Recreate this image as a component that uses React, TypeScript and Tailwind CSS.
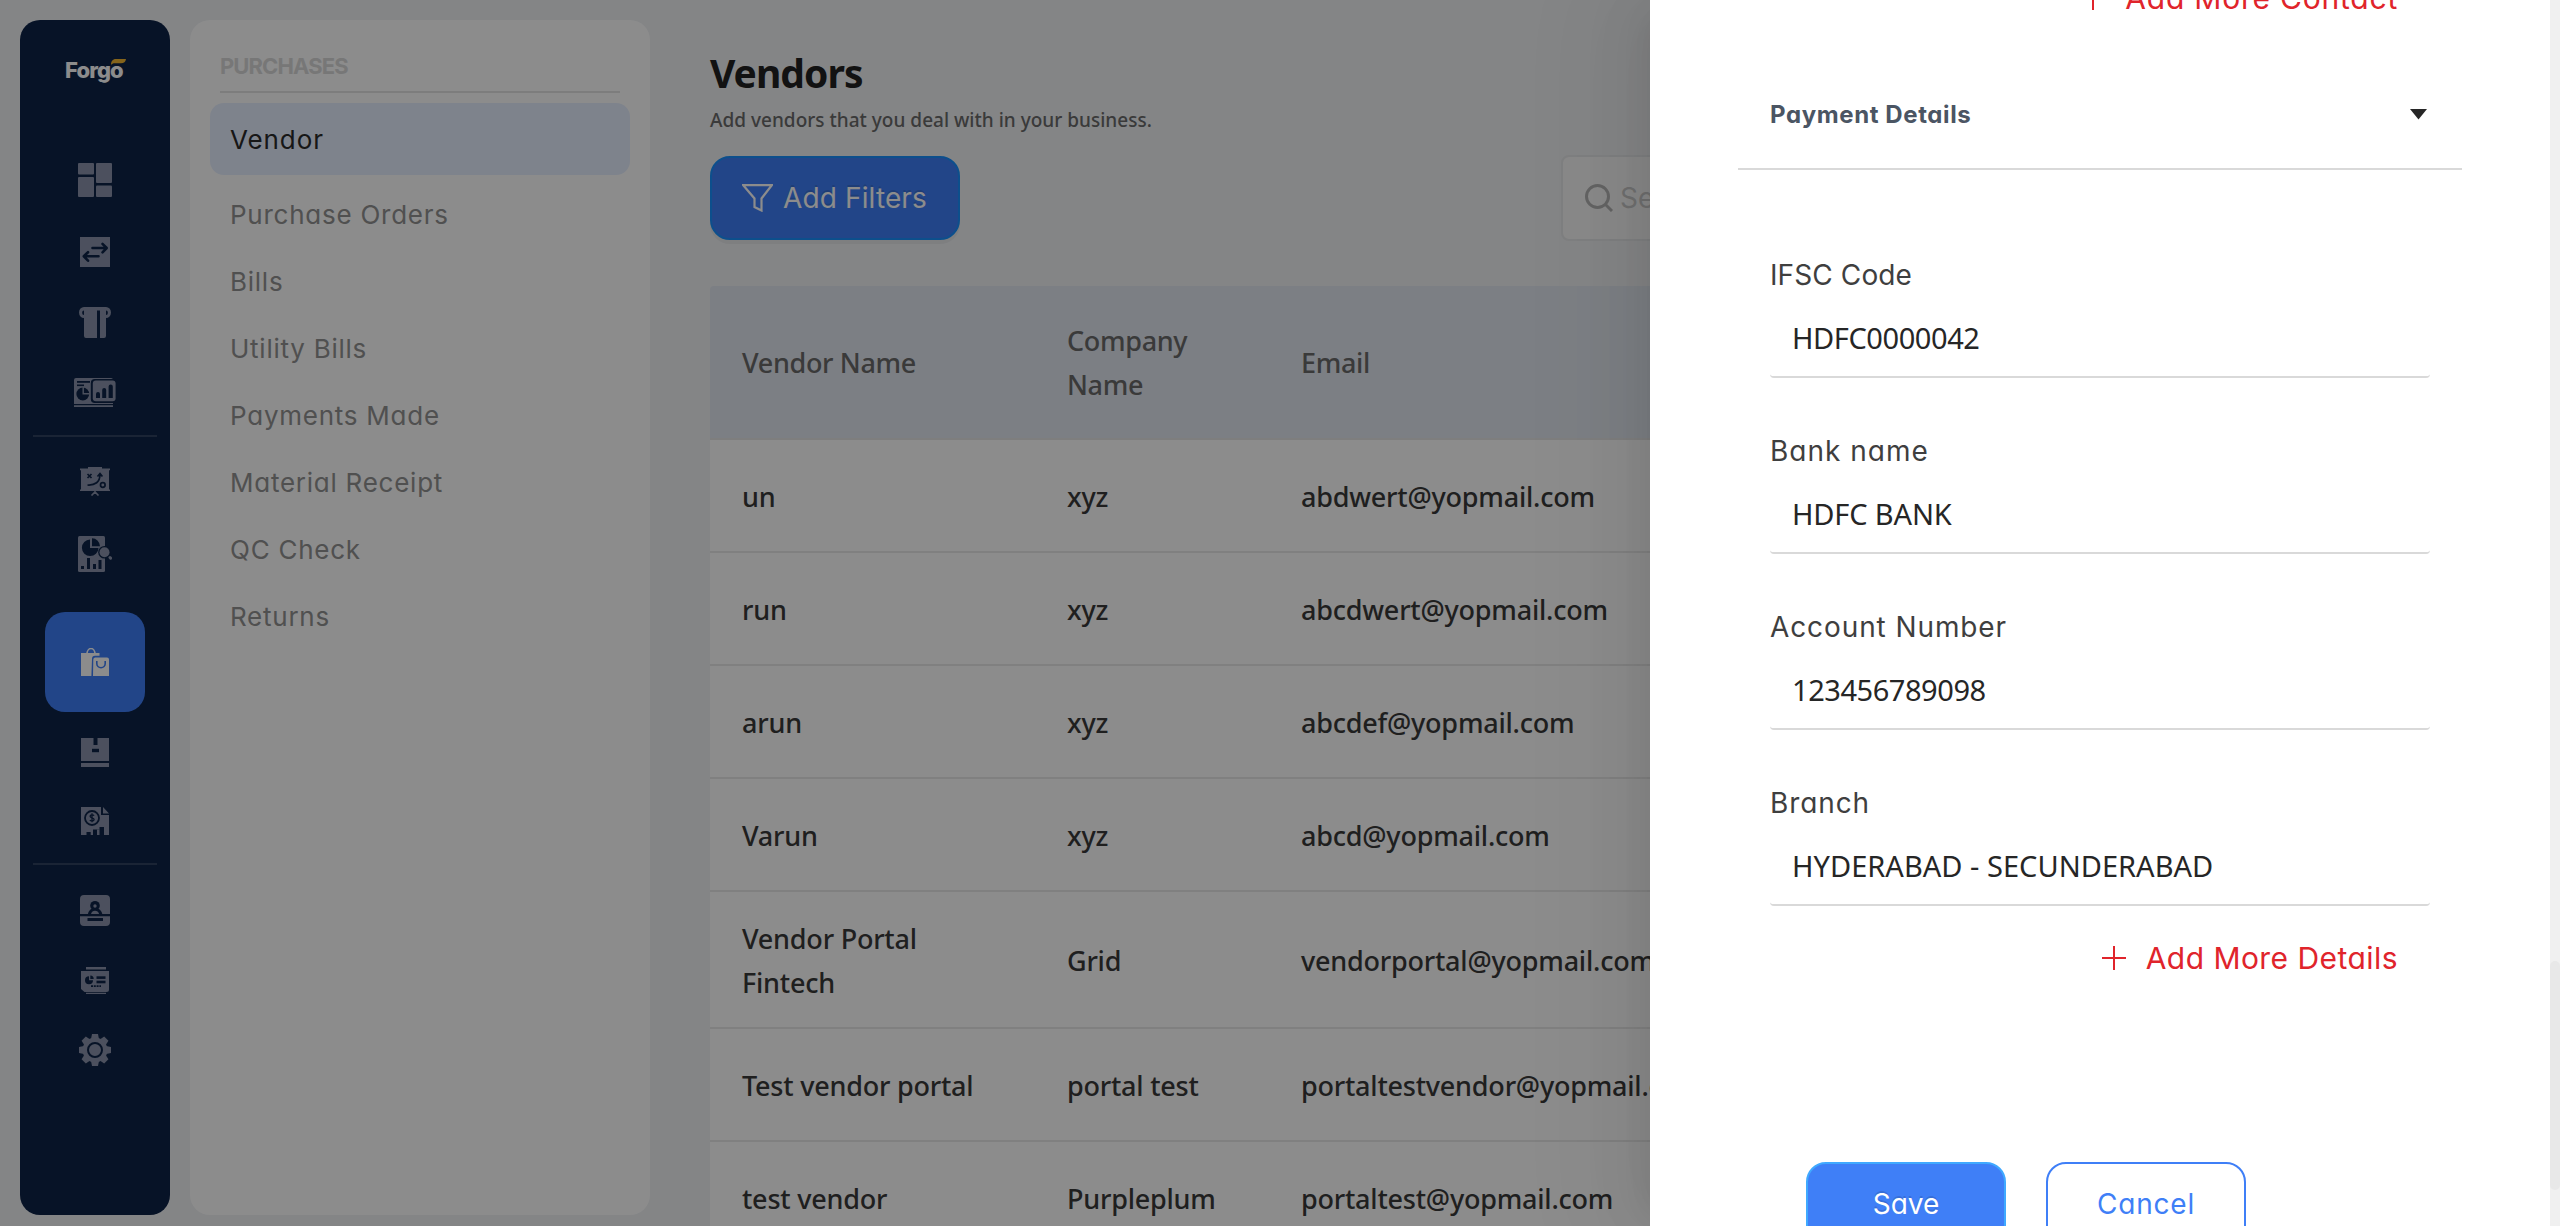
import type { ReactNode } from 'react';

const NAVY = '#0e2347';
const GEAR_TEETH = [0, 45, 90, 135, 180, 225, 270, 315];

function Icon({ w, h, children }: { w: number; h: number; children: ReactNode }) {
  return (
    <svg width={w} height={h} viewBox={`0 0 ${w} ${h}`} fill="currentColor" className="block">
      {children}
    </svg>
  );
}

const DashboardIcon = () => (
  <Icon w={34} h={34}>
    <rect width="16" height="11.5" rx="1" />
    <rect x="18" width="16" height="20" rx="1" />
    <rect y="14" width="16" height="20" rx="1" />
    <rect x="18" y="22.5" width="16" height="11.5" rx="1" />
  </Icon>
);

const TransferIcon = () => (
  <Icon w={30} h={30}>
    <rect width="30" height="30" />
    <g fill="none" stroke={NAVY} strokeWidth="2.6" strokeLinecap="round" strokeLinejoin="round">
      <path d="M12.5 11H26M22.5 6.8 26.7 11l-4.2 4.4" />
      <path d="M18.5 19.3H5M8 15.2l-4.2 4.1L8 23.7" />
    </g>
  </Icon>
);

const ReceiptIcon = () => (
  <Icon w={32} h={31}>
    <path d="M5 0h22a5 5.5 0 0 1 0 11v18a2 2 0 0 1-2 2H7a2 2 0 0 1-2-2V11A5 5.5 0 0 1 5 0z" />
    <path d="M18 3.5h3V31h-3zM5 3.5a1.8 2.2 0 0 0 0 4.6zM27 3.5a1.8 2.2 0 0 1 0 4.6z" fill={NAVY} />
  </Icon>
);

const ReportsIcon = () => (
  <Icon w={42} h={29}>
    <path d="M2 0h35a2 2 0 0 1 2 2v24H0V2a2 2 0 0 1 2-2zM0 27h39v2H0z" />
    <g fill={NAVY}>
      <rect y="26" width="39" height="1.2" />
      <rect x="3" y="3" width="13" height="1.8" />
      <rect x="3" y="6.5" width="7" height="1.6" />
      <circle cx="8.8" cy="16" r="6.4" />
      <rect x="16.8" y="1" width="26" height="24" rx="4" />
    </g>
    <path d="M9.2 9v6.8h6.6" fill="none" stroke="currentColor" strokeWidth="1.4" />
    <rect x="18.8" y="2.6" width="22.8" height="20.6" rx="3" />
    <path d="M22 20v-4a2 2 0 0 1 4 0v4zM28.2 20v-8a2 2 0 0 1 4 0v8zM34.6 20V8.500a2 2 0 0 1 4.200 0V20z" fill={NAVY} />
  </Icon>
);

const StrategyIcon = () => (
  <Icon w={30} h={29}>
    <path d="M8 0h14v1.500h8v1.800h-1v19.200h1V24H0v-1.500h1V3.300H0V1.500h8z" />
    <path d="M15 24v2M11.500 28.500 15 25l3.500 3.500" fill="none" stroke="currentColor" strokeWidth="1.6" />
    <g fill="none" stroke={NAVY} strokeWidth="1.7">
      <path d="m7.500 7 4 4M11.500 7l-4 4M7.500 18C15 18.500 20 15 20 7.500M17.500 9.500 20 6.500l2.400 3" />
      <circle cx="22.800" cy="18" r="2.300" />
    </g>
  </Icon>
);

const AnalyticsIcon = () => (
  <Icon w={34} h={36}>
    <rect width="27" height="36" rx="1.500" />
    <g fill={NAVY}>
      <path d="M12 3.500V12h8.500A8.300 8.300 0 1 1 12 3.500z" />
      <path d="M14 2.300a8 8 0 0 1 8 8h-8z" />
      <rect x="3" y="30" width="3" height="3" />
      <rect x="9" y="22" width="3" height="11" />
      <rect x="15" y="28" width="3" height="5" />
      <rect x="20.500" y="24" width="3" height="9" />
      <circle cx="26.500" cy="16.300" r="6.300" />
    </g>
    <circle cx="26.500" cy="16.300" r="5" />
    <path d="m32 21.500.6.600" fill="none" stroke="currentColor" strokeWidth="3" strokeLinecap="round" />
  </Icon>
);

const BagsIcon = () => (
  <Icon w={28} h={28}>
    <path d="M6 6a4 5.500 0 0 1 8 0" fill="none" stroke="currentColor" strokeWidth="1.600" />
    <path d="M0 5h18.500v2.800H14c-2 0-3 1-3 3L10.400 28H0z" />
    <path d="M14 9.400h12a2 2 0 0 1 2 2V28H12l.3-16.600a2 2 0 0 1 1.700-2z" />
    <path d="M15.800 13v2.500a4.200 4.200 0 0 0 8.400 0V13" fill="none" stroke="#3f7ff7" strokeWidth="1.600" />
  </Icon>
);

const InventoryIcon = () => (
  <Icon w={28} h={29}>
    <path d="M0 0h12.500v7h4V0H28v23H0zM0 25h28v4H0z" />
    <rect x="11" y="10.800" width="7" height="3.400" fill={NAVY} />
  </Icon>
);

const InvoiceIcon = () => (
  <Icon w={28} h={28}>
    <path d="M0 0h20v8h8v20h-5V20h-4.500v2.500h-6.500V25H5.500v3H0zM22 0l6 6.500h-6z" />
    <path d="M9.700 25H12v3H9.700zM16 22.500h2.500V28H16z" />
    <circle cx="11" cy="11" r="7" fill="none" stroke={NAVY} strokeWidth="1.800" />
    <path d="M13 8.800c-.6-1.300-3.900-1.300-3.900.4 0 1.900 4 1.300 4 3.400 0 1.800-3.500 1.800-4.200.3M11 6.300v9" fill="none" stroke={NAVY} strokeWidth="1.300" />
  </Icon>
);

const ContactIcon = () => (
  <Icon w={30} h={31}>
    <path d="M4 0h22a4 4 0 0 1 4 4v15H0V4a4 4 0 0 1 4-4zM0 21.200h30V27a4 4 0 0 1-4 4H4a4 4 0 0 1-4-4z" />
    <g fill={NAVY}>
      <circle cx="15" cy="10.700" r="4.800" />
      <path d="M7.800 19.500c.8-4 3.200-6.500 7.200-6.500s6.600 2.500 7.400 6.500z" />
      <rect x="7.500" y="23" width="15.500" height="3" />
    </g>
    <circle cx="15" cy="11" r="1.700" />
    <path d="M11 19c.7-2.200 2-3.200 4-3.200s3.400 1 4.100 3.200z" />
  </Icon>
);

const StatementIcon = () => (
  <Icon w={28} h={27}>
    <path d="M5 0h20v2.500H5zM0 4h28v18.500a2.500 2.500 0 0 1-2.500 2.500h-22L0 22zM5 25.800h20V27H5z" />
    <g fill={NAVY}>
      <path d="M8 9.300v4h4a4 4 0 1 1-4-4z" />
      <path d="M9.300 8.500a3.500 3.500 0 0 1 3.400 3.500H9.300z" />
      <rect x="15.500" y="9.300" width="9" height="2.600" />
      <rect x="15.500" y="13.700" width="9" height="2.600" />
      <path d="M10 18.300h2v1.600h-2zM12.800 18.300h2v1.600h-2zM15.600 18.300h2v1.600h-2zM18.400 18.300h1.600v1.600h-1.600z" />
    </g>
  </Icon>
);

const SettingsIcon = () => (
  <Icon w={32} h={32}>
    {GEAR_TEETH.map((a) => (
      <path key={a} d="M13 0h6l1.200 6h-8.400z" transform={`rotate(${a} 16 16)`} />
    ))}
    <circle cx="16" cy="16" r="12.400" />
    <circle cx="16" cy="16" r="7" fill="none" stroke={NAVY} strokeWidth="2" />
  </Icon>
);

function Slot({ className, children }: { className: string; children: ReactNode }) {
  return <div className={`flex shrink-0 items-center justify-center ${className}`}>{children}</div>;
}

function Sidebar() {
  return (
    <nav className="flex h-[1195px] w-[150px] shrink-0 flex-col items-center rounded-[20px] bg-[#0e2347] text-[#8a93ab]">
      <div className="relative mt-[34px] h-[90px] w-[60px] text-[22px] leading-[32px] font-extrabold tracking-[-0.9px] text-white">
        Forgo
        <svg width="15" height="6" viewBox="0 0 15 7" preserveAspectRatio="none" className="absolute top-[5px] left-[46px]">
          <path d="M0 7C0 3 1.500 0 5 0h10c-.5 3.500-2 5-5 5H4C2 5 .8 5.600 0 7z" fill="#f2b632" />
        </svg>
      </div>
      <Slot className="h-[72px]"><DashboardIcon /></Slot>
      <Slot className="h-[72px]"><TransferIcon /></Slot>
      <Slot className="h-[69px]"><ReceiptIcon /></Slot>
      <Slot className="h-[71px]"><ReportsIcon /></Slot>
      <div className="mt-[7px] h-[2px] w-[124px] shrink-0 bg-white/15" />
      <Slot className="h-[88px]"><StrategyIcon /></Slot>
      <Slot className="h-[58px]"><AnalyticsIcon /></Slot>
      <Slot className="mt-[29px] h-[100px] w-[100px] rounded-[20px] bg-[#3f7ff7] text-white"><BagsIcon /></Slot>
      <Slot className="h-20"><InventoryIcon /></Slot>
      <Slot className="h-[58px]"><InvoiceIcon /></Slot>
      <div className="mt-[13px] h-[2px] w-[124px] shrink-0 bg-white/15" />
      <Slot className="h-[91px]"><ContactIcon /></Slot>
      <Slot className="h-12"><StatementIcon /></Slot>
      <Slot className="h-[92px]"><SettingsIcon /></Slot>
    </nav>
  );
}

const MENU = ['Purchase Orders', 'Bills', 'Utility Bills', 'Payments Made', 'Material Receipt', 'QC Check', 'Returns'];

function SubMenu() {
  return (
    <aside className="flex h-[1195px] w-[460px] shrink-0 flex-col rounded-[20px] bg-white">
      <div className="mx-[30px] mt-[30px] border-b-2 border-[#e4e4e4] pb-[9px] text-[22px] leading-[32px] font-bold tracking-[-0.9px] text-[#d9d9d9]">
        PURCHASES
      </div>
      <div className="mx-5 mt-[10px] mb-[6px] flex h-[72px] items-center rounded-[14px] bg-[#e6efff] px-5 text-[26px] tracking-[0.9px] text-[#2b2b2b]">
        Vendor
      </div>
      {MENU.map((m) => (
        <div key={m} className="flex h-[67px] items-center px-10 text-[26px] tracking-[0.75px] text-[#929292]">
          {m}
        </div>
      ))}
    </aside>
  );
}

const VENDORS: [string, string, string][] = [
  ['un', 'xyz', 'abdwert@yopmail.com'],
  ['run', 'xyz', 'abcdwert@yopmail.com'],
  ['arun', 'xyz', 'abcdef@yopmail.com'],
  ['Varun', 'xyz', 'abcd@yopmail.com'],
  ['Vendor Portal Fintech', 'Grid', 'vendorportal@yopmail.com'],
  ['Test vendor portal', 'portal test', 'portaltestvendor@yopmail.com'],
  ['test vendor', 'Purpleplum', 'portaltest@yopmail.com'],
];

function VendorsPage() {
  return (
    <main className="flex w-[1810px] shrink-0 flex-col pt-[25px] font-['Noto_Sans',sans-serif]">
      <h1 className="text-[39px] leading-[56px] font-bold tracking-[-0.95px] text-[#222]">Vendors</h1>
      <p className="mt-[3px] text-[19px] leading-[32px] font-medium tracking-[0.01px] text-[#6a6a6a]">
        Add vendors that you deal with in your business.
      </p>
      <div className="mt-[20px] flex h-[84px] items-center justify-between">
        <button className="flex h-[84px] w-[250px] items-center rounded-[20px] border-2 border-[#1890ff] bg-[#3f7ff7] pl-[30px] font-['Inter',sans-serif] text-[28px] tracking-[0.13px] text-white shadow-[0_4px_0_rgba(0,0,0,0.045)]">
          <svg width="31" height="28" viewBox="0 0 31 28" fill="none" stroke="currentColor" strokeWidth="2.200" className="mr-[10px]">
            <path d="M1.200 1.200h28.600L19.500 14.500V26.500l-7-3.500v-8.500z" />
          </svg>
          <span className="[text-shadow:0_-2px_0_rgba(0,0,0,0.12)]">Add Filters</span>
        </button>
        <div className="flex h-[86px] w-[959px] items-center rounded-[8px] border-2 border-[#e6e7e9] bg-[#fafafa] pl-[22px] font-['Inter',sans-serif] text-[28px] text-[#cacaca]">
          <svg width="28" height="28" viewBox="0 0 28 28" fill="none" stroke="#b5b5b5" strokeWidth="3" className="mr-[7px]">
            <circle cx="12.500" cy="12.500" r="11" />
            <path d="m20.500 20.500 6.500 6.500" />
          </svg>
          Search
        </div>
      </div>
      <div className="mt-[46px] text-[27px] leading-[44px] font-medium">
        <div className="flex h-[154px] items-center rounded-t-[4px] border-b-2 border-[#e6e6e6] bg-[#e2e7f0] pt-[2px] pl-8 tracking-[-0.33px] text-[#6a6a6a]">
          <div className="w-[325px]">Vendor Name</div>
          <div className="w-[234px] pr-16">Company Name</div>
          <div>Email</div>
        </div>
        {VENDORS.map(([name, company, email]) => (
          <div
            key={name}
            className="flex min-h-[113px] items-center border-b-2 border-[#eaeaea] bg-white pt-[25px] pb-[22px] pl-8 tracking-[-0.22px] text-[#3a3a3a]"
          >
            <div className="w-[325px] pr-16">{name}</div>
            <div className="w-[234px]">{company}</div>
            <div>{email}</div>
          </div>
        ))}
      </div>
    </main>
  );
}

function AddMore({ label, className }: { label: string; className: string }) {
  return (
    <div className={`flex items-center justify-end gap-5 pr-[152px] text-[30px] leading-[44px] text-[#e0242b] ${className}`}>
      <svg width="24" height="24" viewBox="0 0 24 24" fill="none" stroke="currentColor" strokeWidth="2">
        <path d="M12 0v24M0 12h24" />
      </svg>
      {label}
    </div>
  );
}

function Field({ label, value, labelClass, valueClass }: { label: string; value: string; labelClass: string; valueClass: string }) {
  return (
    <div className="mx-[120px] mb-[51px] last-of-type:mb-0">
      <div className={`text-[28px] leading-[44px] text-[#3f3f3f] ${labelClass}`}>{label}</div>
      <div
        className={`flex h-[81px] items-center rounded-[4px] border-b-2 border-[#d9d9d9] pt-[2px] pl-[22px] font-['Noto_Sans',sans-serif] text-[29px] text-[#262626] ${valueClass}`}
      >
        {value}
      </div>
    </div>
  );
}

function Drawer() {
  return (
    <section className="flex h-full w-[910px] bg-white shadow-[-12px_0_32px_-16px_rgba(0,0,0,0.08),-18px_0_56px_rgba(0,0,0,0.05),-24px_0_96px_32px_rgba(0,0,0,0.03)]">
      <div className="h-full w-[900px] overflow-hidden">
        <AddMore label="Add More Contact" className="-mt-6 tracking-[0.78px]" />
        <div className="mx-[88px] mt-[38px] flex h-[112px] items-center justify-between border-b-2 border-[#d9d9d9] pt-[3px] pr-[35px] pl-8 text-[24px] font-bold tracking-[0.6px] text-[#4b5563]">
          Payment Details
          <svg width="17" height="11" viewBox="0 0 17 11">
            <path d="M0 0h17L8.500 10.500z" fill="#262626" />
          </svg>
        </div>
        <div className="mt-[83px]">
          <Field label="IFSC Code" value="HDFC0000042" labelClass="tracking-[0.1px]" valueClass="tracking-[-0.42px]" />
          <Field label="Bank name" value="HDFC BANK" labelClass="tracking-[1px]" valueClass="tracking-[-0.15px]" />
          <Field label="Account Number" value="123456789098" labelClass="tracking-[0.9px]" valueClass="tracking-[-0.45px]" />
          <Field label="Branch" value="HYDERABAD - SECUNDERABAD" labelClass="tracking-[0.9px]" valueClass="tracking-[0.02px]" />
        </div>
        <AddMore label="Add More Details" className="mt-[30px] tracking-[0.45px]" />
        <div className="mt-[182px] ml-[156px] flex gap-10 text-[28px]">
          <button className="h-[84px] w-[200px] rounded-[20px] border-2 border-[#40a9ff] bg-[#3f7ff7] text-white [text-shadow:0_-2px_0_rgba(0,0,0,0.12)]">
            Save
          </button>
          <button className="h-[84px] w-[200px] rounded-[20px] border-2 border-[#3f7ff7] bg-white tracking-[0.79px] text-[#3f7ff7]">
            Cancel
          </button>
        </div>
      </div>
      <div className="h-full w-[10px] bg-[#f0f0f0] pt-[961px]">
        <div className="h-[229px] rounded-full bg-[#e8e8e8]" />
      </div>
    </section>
  );
}

export default function App() {
  return (
    <div className="relative h-[1226px] w-[2560px] overflow-hidden bg-[#f0f2f5] font-['Inter',sans-serif] [font-feature-settings:'cv11']">
      <div className="flex pt-5 pl-5">
        <Sidebar />
        <div className="ml-5 flex">
          <SubMenu />
          <div className="ml-[60px]">
            <VendorsPage />
          </div>
        </div>
      </div>
      <div className="absolute inset-0 flex justify-end bg-black/45">
        <Drawer />
      </div>
    </div>
  );
}
